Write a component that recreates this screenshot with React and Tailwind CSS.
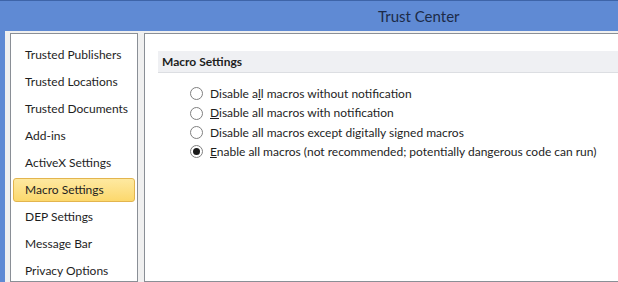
import React from "react";

const items = [
  "Trusted Publishers",
  "Trusted Locations",
  "Trusted Documents",
  "Add-ins",
  "ActiveX Settings",
  "Macro Settings",
  "DEP Settings",
  "Message Bar",
  "Privacy Options",
];

function Radio({ checked }) {
  return (
    <span className="relative w-[13px] h-[13px] rounded-full border border-[#808080] bg-white shrink-0 flex items-center justify-center">
      {checked && <span className="w-[7px] h-[7px] rounded-full bg-[#1a1a1a]" />}
    </span>
  );
}

export default function App() {
  const font = { fontFamily: 'Lato, "Noto Sans", sans-serif' };
  return (
    <div className="w-[618px] h-[282px] overflow-hidden bg-[#f0f0f0] flex flex-col whitespace-nowrap" style={font}>
      <div className="h-[31px] shrink-0 bg-[#5f8ad4] border-t border-[#3e64a8] flex items-center pl-[378px] text-[15px] text-[#1c2b48]">
        Trust Center
      </div>
      <div className="flex flex-1 min-h-0">
        <div className="w-[5px] bg-[#5f8ad4] shrink-0" />
        <div className="flex flex-1 pt-[2px] pl-[5px]">
          <div className="w-[128px] shrink-0 bg-white border border-[#8a8f96] pt-[7px] text-[12px] text-[#1e1e1e]">
            {items.map((t) =>
              t === "Macro Settings" ? (
                <div key={t} className="h-[27px] flex items-center px-[2px]">
                  <div className="w-full h-[24px] flex items-center pl-[11px] rounded-[3px] border border-[#e3b54e] bg-gradient-to-b from-[#fee9a0] to-[#fcd86c]">
                    {t}
                  </div>
                </div>
              ) : (
                <div key={t} className="h-[27px] flex items-center pl-[14px]">
                  {t}
                </div>
              )
            )}
          </div>
          <div className="flex-1 ml-[6px] -mr-[4px] bg-white border border-[#8a8f96] pt-[17px] pl-[13px]">
            <div className="h-[22px] bg-[#eff0f3] border-b border-[#dcdee2] flex items-center pl-[4px] pt-[1px] text-[12px] font-bold text-[#1e1e1e]">
              Macro Settings
            </div>
            <div className="mt-[11px] pl-[32px] text-[12px] text-[#1e1e1e] flex flex-col">
              <div className="h-[19.5px] flex items-center gap-[7px]">
                <Radio />
                <span>Disable a<u>l</u>l macros without notification</span>
              </div>
              <div className="h-[19.5px] flex items-center gap-[7px]">
                <Radio />
                <span><u>D</u>isable all macros with notification</span>
              </div>
              <div className="h-[19px] flex items-center gap-[7px]">
                <Radio />
                <span>Disable all macros except di<u>g</u>itally signed macros</span>
              </div>
              <div className="h-[19px] flex items-center gap-[7px]">
                <Radio checked />
                <span><u>E</u>nable all macros (not recommended; potentially dangerous code can run)</span>
              </div>
            </div>
          </div>
        </div>
      </div>
    </div>
  );
}
